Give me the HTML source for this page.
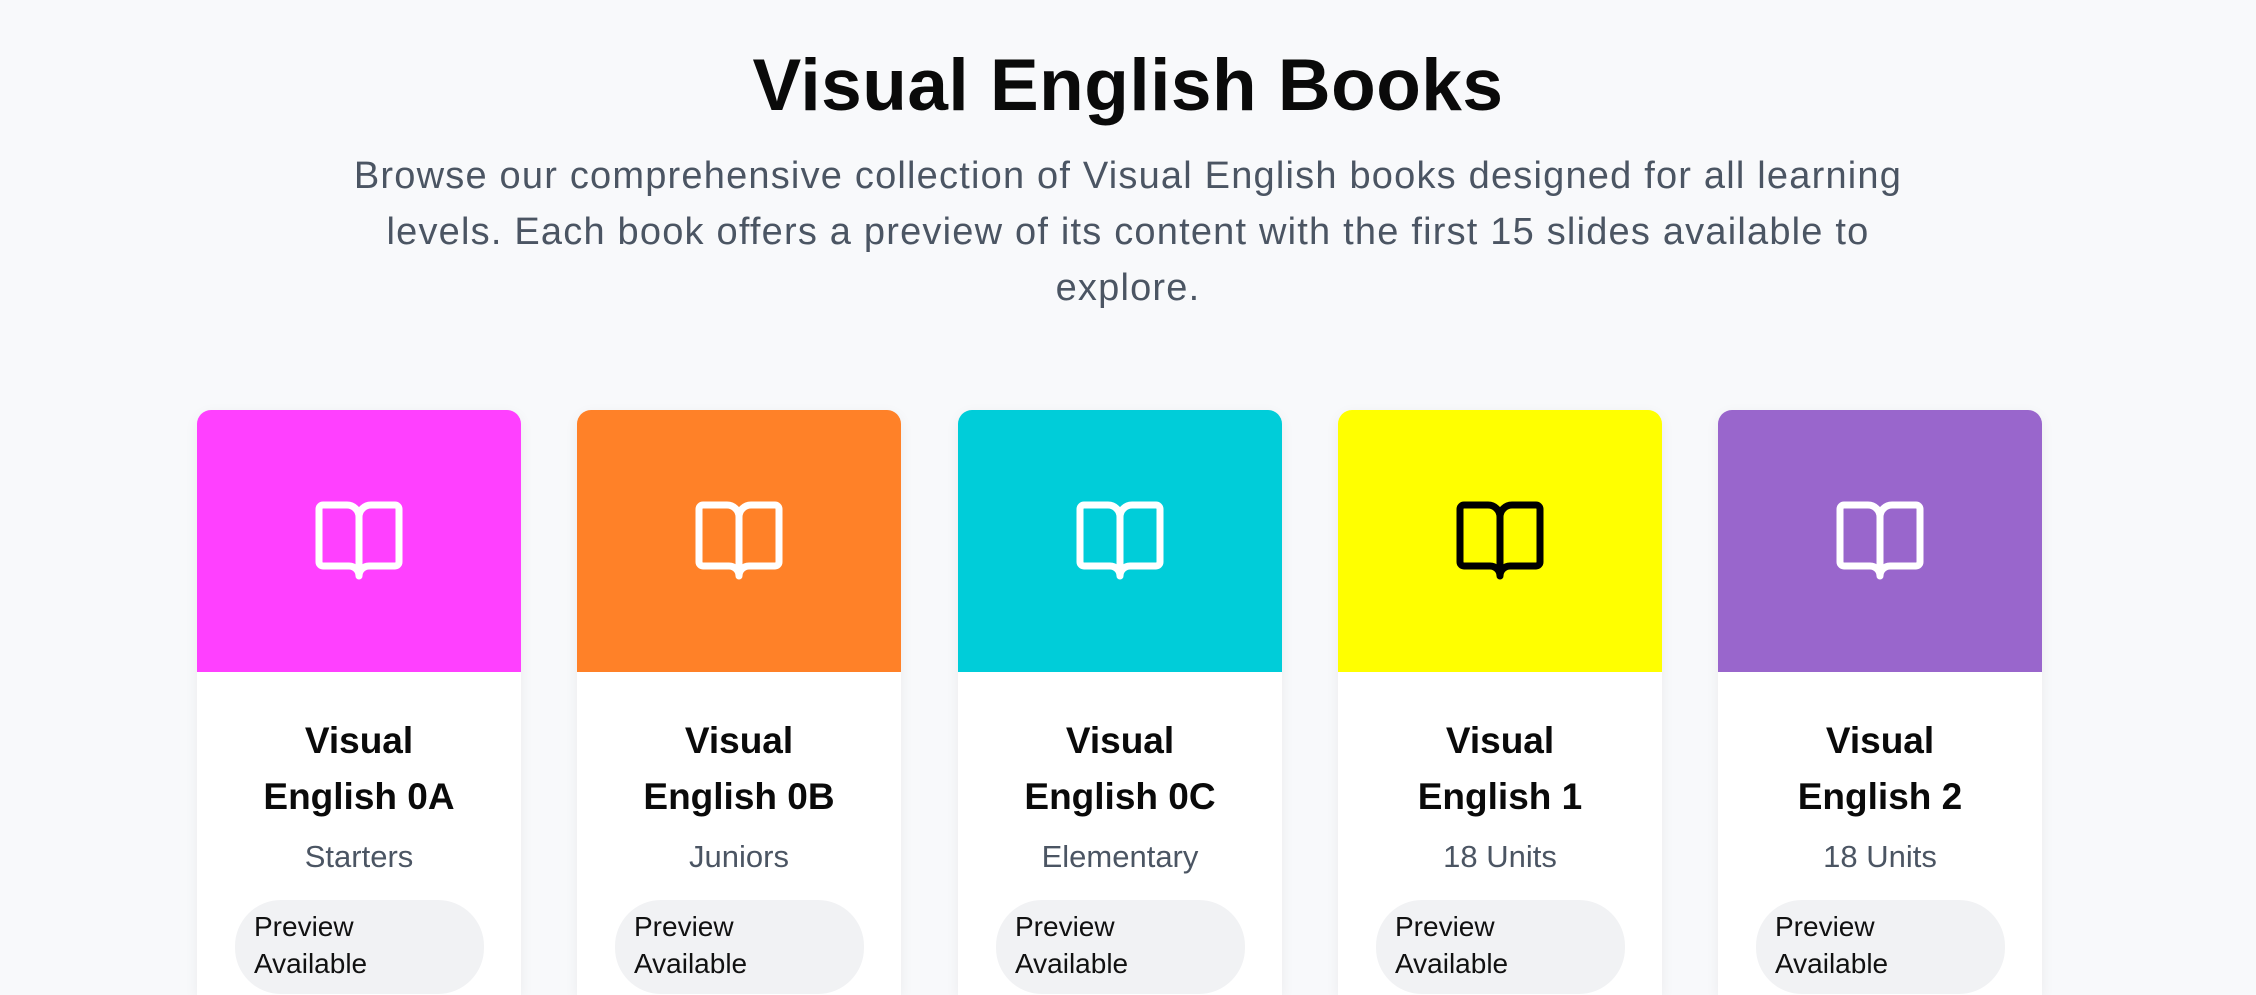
<!DOCTYPE html>
<html style="height:995px;overflow:hidden"><head><meta charset="utf-8"><style>
body{margin:0;width:2256px;height:995px;overflow:hidden;background:#f8f9fb;font-family:"Liberation Sans",sans-serif;position:relative;}
h1{margin:0;position:absolute;top:44px;left:0;width:2256px;text-align:center;font-size:73px;font-weight:700;color:#0a0a0a;letter-spacing:0.5px;}
.sub{position:absolute;top:148px;left:338px;width:1580px;text-align:center;font-size:38px;line-height:56px;color:#4b5563;letter-spacing:1.2px;}
.card{position:absolute;top:410px;width:324px;height:585px;background:#fff;border-radius:14px 14px 0 0;overflow:hidden;box-shadow:0 4px 14px rgba(0,0,0,0.06);}
.top{height:262px;display:flex;align-items:center;justify-content:center;}
.t{text-align:center;font-weight:700;font-size:37px;line-height:56px;margin-top:41px;color:#0a0a0a;}
.s{text-align:center;font-size:31px;color:#4b5563;margin-top:10px;line-height:44px;}
.pill{margin:21px 0 0 38px;width:230px;height:86px;border-radius:46px;background:#f1f2f4;padding-left:19px;font-size:28px;line-height:37px;color:#111;box-sizing:content-box;padding-top:8px;}
</style></head><body>
<h1>Visual English Books</h1>
<div class="sub">Browse our comprehensive collection of Visual English books designed for all learning levels. Each book offers a preview of its content with the first 15 slides available to explore.</div>
<svg width="0" height="0" style="position:absolute"><defs><symbol id="bk" viewBox="0 0 88 80"><path d="M8 4h24a12 12 0 0 1 12 12 12 12 0 0 1 12-12h24a4 4 0 0 1 4 4v53a4 4 0 0 1-4 4H54a10 10 0 0 0-10 10 10 10 0 0 0-10-10H8a4 4 0 0 1-4-4V8a4 4 0 0 1 4-4zM44 16v55" fill="none" stroke="currentColor" stroke-width="7" stroke-linejoin="round" stroke-linecap="round"/></symbol></defs></svg>
<div class="card" style="left:197px"><div class="top" style="background:#ff40ff;color:#fff"><svg width="88" height="80"><use href="#bk"/></svg></div><div class="t">Visual<br>English 0A</div><div class="s">Starters</div><div class="pill">Preview<br>Available</div></div>
<div class="card" style="left:577px"><div class="top" style="background:#ff8128;color:#fff"><svg width="88" height="80"><use href="#bk"/></svg></div><div class="t">Visual<br>English 0B</div><div class="s">Juniors</div><div class="pill">Preview<br>Available</div></div>
<div class="card" style="left:958px"><div class="top" style="background:#00cdd9;color:#fff"><svg width="88" height="80"><use href="#bk"/></svg></div><div class="t">Visual<br>English 0C</div><div class="s">Elementary</div><div class="pill">Preview<br>Available</div></div>
<div class="card" style="left:1338px"><div class="top" style="background:#ffff00;color:#000"><svg width="88" height="80"><use href="#bk"/></svg></div><div class="t">Visual<br>English 1</div><div class="s">18 Units</div><div class="pill">Preview<br>Available</div></div>
<div class="card" style="left:1718px"><div class="top" style="background:#9966cc;color:#fff"><svg width="88" height="80"><use href="#bk"/></svg></div><div class="t">Visual<br>English 2</div><div class="s">18 Units</div><div class="pill">Preview<br>Available</div></div>
</body></html>
